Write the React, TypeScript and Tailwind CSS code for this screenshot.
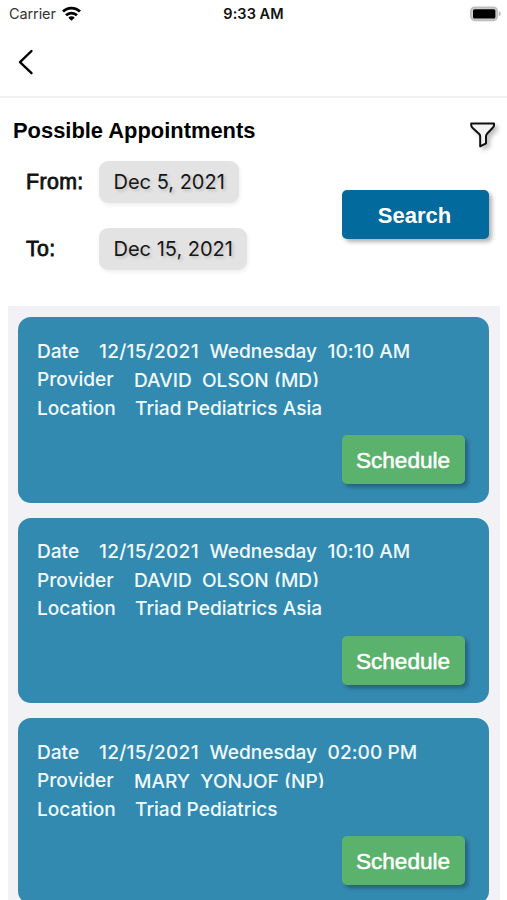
import React, { useState } from 'react';

interface Appointment {
  id: number; date: string; day: string; time: string; provider: string; location: string;
}

const appointments: Appointment[] = [
  { id: 1, date: '12/15/2021', day: 'Wednesday', time: '10:10 AM', provider: 'DAVID  OLSON (MD)', location: 'Triad Pediatrics Asia' },
  { id: 2, date: '12/15/2021', day: 'Wednesday', time: '10:10 AM', provider: 'DAVID  OLSON (MD)', location: 'Triad Pediatrics Asia' },
  { id: 3, date: '12/15/2021', day: 'Wednesday', time: '02:00 PM', provider: 'MARY  YONJOF (NP)', location: 'Triad Pediatrics' },
];

function StatusBar() {
  return (
    <div className="grid h-7 grid-cols-3 items-center pl-[9px] pr-[6px] text-[#111]">
      <div className="flex items-center gap-[6px]">
        <span className="text-[14.5px] tracking-[-0.1px] text-[#333]">Carrier</span>
        <svg className="-mt-[2px]" width="19" height="15" viewBox="0 0 19 15" fill="none" stroke="#000" strokeWidth="2.8">
          <path d="M1 5.600a12 12 0 0 1 17 0" />
          <path d="M4 9.300a7.800 7.800 0 0 1 11 0" />
          <path d="M9.500 14.800 6.300 11.700a4.500 4.500 0 0 1 6.400 0z" fill="#000" stroke="none" />
        </svg>
      </div>
      <span className="-ml-[3px] text-center text-[14.5px] font-semibold tracking-[0.05px]">9:33 AM</span>
      <svg className="-mt-px justify-self-end" width="31" height="16" viewBox="0 0 31 16">
        <rect x="0.9" y="1.3" width="26.4" height="13" rx="4" fill="#d0d0d0" stroke="#bdbdbd" strokeWidth="1.7" />
        <rect x="3" y="3.3" width="22.4" height="9.2" rx="1.5" fill="#000" />
        <path d="M28.900 5.300v5c1.200-.5 1.900-1.400 1.900-2.500s-.7-2-1.900-2.500z" fill="#b9b9b9" />
      </svg>
    </div>
  );
}

function DateField({ label, value }: { label: string; value: string }) {
  return (
    <div className="flex items-center">
      <span className="w-[73px] pt-[2px] font-['Liberation_Sans',sans-serif] text-[21.3px] tracking-[0.4px] text-[#111] [-webkit-text-stroke:0.8px_#111]">{label}</span>
      <button className="h-[42px] rounded-[9px] bg-[#e3e3e4] px-[14.5px] text-[20px] text-[#161616] shadow-[1px_2px_4px_rgba(0,0,0,0.07)] [text-shadow:2px_2px_3px_rgba(0,0,0,0.16)]">
        {value}
      </button>
    </div>
  );
}

function AppointmentCard({ item }: { item: Appointment }) {
  return (
    <article className="flex h-[185.5px] shrink-0 flex-col rounded-[13px] bg-[#338ab1] pl-[19px] pr-6 pt-5 text-[19.1px] font-[540] text-[#f0faff]">
      <div className="flex h-[28.5px] items-center whitespace-pre">
        <span className="w-[62px]">Date</span>
        <span className="w-[110.5px] tracking-[0.25px]">{item.date}</span>
        <span className="w-[118px]">{item.day}</span>
        <span className="tracking-[0.05px]">{item.time}</span>
      </div>
      <div className="flex h-[28.5px] items-center whitespace-pre">
        <span className="w-[97px]">Provider</span>
        {/* fixed line height cuts the bottom of the brackets */}
        <span className="-mt-[2px] h-[16px] overflow-hidden leading-[18.5px]">{item.provider}</span>
      </div>
      <div className="flex h-[28.5px] items-center whitespace-pre">
        <span className="w-[98px]">Location</span>
        <span>{item.location}</span>
      </div>
      <button className="mt-[12.5px] h-[49px] w-[123px] self-end rounded-[5px] bg-[#5ab26d] pr-[1px] pt-[3px] font-['Liberation_Sans',sans-serif] text-[22.6px] font-normal text-white shadow-[3px_3px_4px_rgba(0,0,0,0.3)] [-webkit-text-stroke:0.5px_white]">
        Schedule
      </button>
    </article>
  );
}

export default function App() {
  const [from] = useState('Dec 5, 2021');
  const [to] = useState('Dec 15, 2021');

  return (
    <div className="flex h-[900px] w-full flex-col overflow-hidden bg-white font-['Inter',sans-serif]">
      <StatusBar />
      <header className="flex h-[70px] shrink-0 items-center border-b-2 border-[#f1f1f3] pl-[18px]">
        <button aria-label="Back">
          <svg width="16" height="26" viewBox="0 0 16 26" fill="none" stroke="#000" strokeWidth="2.4" strokeLinecap="round" strokeLinejoin="round">
            <path d="M13.500 2 2 13.200 13.500 24.200" />
          </svg>
        </button>
      </header>

      {/* Search filters */}
      <section className="h-[208px] shrink-0 pl-[13px] pr-[9px] pt-[18px]">
        <div className="flex h-[45px] justify-between">
          <h1 className="pt-px font-['Liberation_Sans',sans-serif] text-[21.9px] font-bold leading-[27px] text-black">Possible Appointments</h1>
          <button aria-label="Filter" className="mt-[5px] self-start">
            <svg className="[filter:drop-shadow(3px_3px_2px_rgba(0,0,0,0.25))]" width="30" height="30" viewBox="0 0 30 30" fill="#f4f4f4" stroke="#111" strokeWidth="2" strokeLinejoin="round">
              <path d="M3.200 2.500H26V4.500Q25.800 5.800 24.500 7L19 12.800Q18 14 18 15.600V22.300L12.200 25.400V15.600Q12.200 14 11 12.800L4.700 7Q3.400 5.800 3.200 4.500Z" />
            </svg>
          </button>
        </div>
        <div className="flex justify-between pl-[13px] pr-[9px]">
          <div className="flex flex-col gap-[25px]">
            <DateField label="From:" value={from} />
            <DateField label="To:" value={to} />
          </div>
          <button className="mt-[29px] h-[49px] w-[147px] rounded-[5px] bg-[#026a9d] pr-[2px] pt-[2px] font-['Liberation_Sans',sans-serif] text-[22px] font-bold text-white shadow-[3px_3px_4px_rgba(0,0,0,0.3)]">
            Search
          </button>
        </div>
      </section>

      <main className="ml-2 mr-[7px] flex flex-1 flex-col gap-[15px] overflow-hidden bg-[#f1f1f6] pl-[10px] pr-[11px] pt-[11px]">
        {appointments.map(item => <AppointmentCard key={item.id} item={item} />)}
      </main>
    </div>
  );
}
